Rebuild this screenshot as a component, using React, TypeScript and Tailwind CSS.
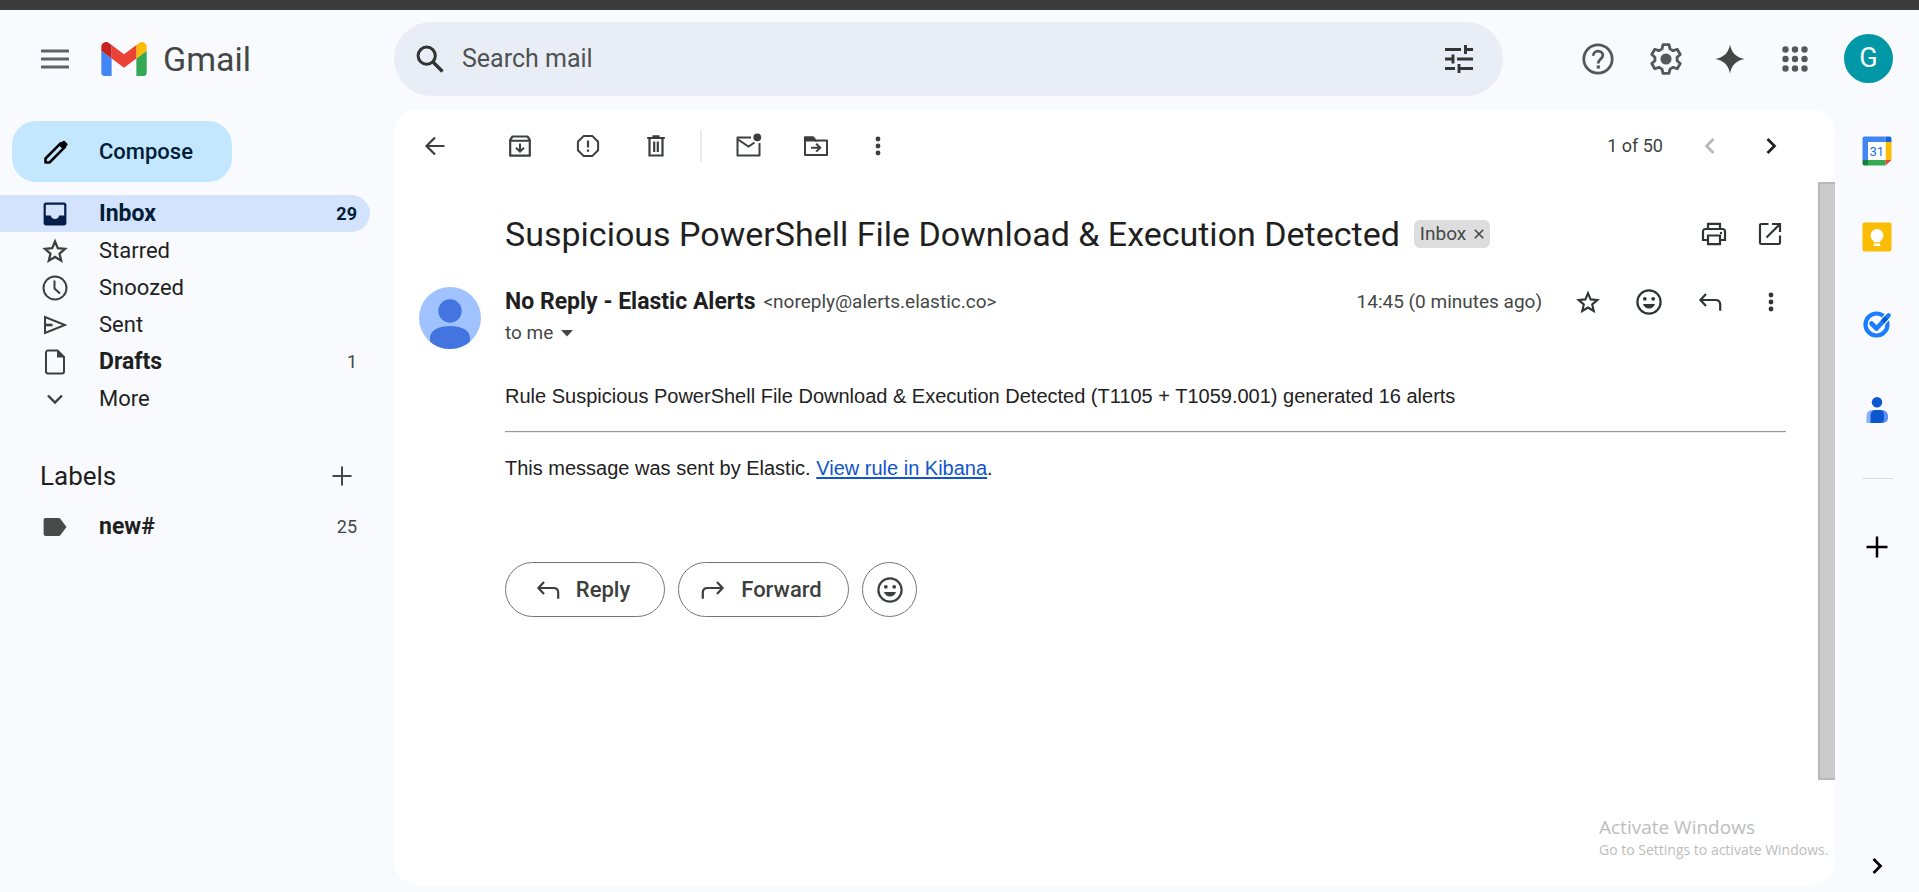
import type { ReactNode } from "react";

type IconProps = { className?: string; box?: number; children: ReactNode };

/* Line icon on a square grid; strokes take the current text colour. */
function Line({ className = "size-6", box = 24, children }: IconProps) {
  return (
    <svg
      viewBox={`0 0 ${box} ${box}`}
      className={`shrink-0 ${className}`}
      fill="none"
      stroke="currentColor"
      strokeWidth={2}
      aria-hidden="true"
    >
      {children}
    </svg>
  );
}

function IconButton({ label, className = "", children }: { label: string; className?: string; children: ReactNode }) {
  return (
    <button type="button" aria-label={label} className={`flex h-12 shrink-0 items-center justify-center ${className}`}>
      {children}
    </button>
  );
}

const MoreIcon = () => (
  <Line>
    <g fill="currentColor" stroke="none">
      <circle cx="12" cy="5" r="2.4" />
      <circle cx="12" cy="12" r="2.4" />
      <circle cx="12" cy="19" r="2.4" />
    </g>
  </Line>
);

const ReplyIcon = () => (
  <Line className="size-6">
    <path d="M8 4 2.400 10 8 16M2.800 10h14.700c2.900 0 4.700 1.900 4.700 4.800v6" strokeWidth="2.200" />
  </Line>
);

const ForwardIcon = () => (
  <Line className="size-6">
    <path d="m16 4 5.600 6-5.600 6M21.200 10H6.500c-2.900 0-4.700 1.900-4.700 4.800v6" strokeWidth="2.200" />
  </Line>
);

const SmileIcon = () => (
  <Line className="size-[26px]" box={26}>
    <circle cx="13" cy="13" r="11.6" strokeWidth="2.2" />
    <g fill="currentColor" stroke="none">
      <circle cx="8.8" cy="9.8" r="1.9" />
      <circle cx="17.2" cy="9.8" r="1.9" />
      <path d="M7 15h12c-.7 2.7-3.1 4.600-6 4.600S7.700 17.700 7 15Z" />
    </g>
  </Line>
);

const StarIcon = ({ className = "size-[26px]" }: { className?: string }) => (
  <Line className={className} box={26}>
    <path
      d="M13 4.200 15.600 10.400 22.300 11 17.200 15.400 18.750 22 13 18.500 7.250 22 8.800 15.400 3.700 11 10.400 10.400Z"
      strokeWidth="2.100"
      strokeLinejoin="miter"
    />
  </Line>
);

const ChevronRight = ({ className = "size-6" }: { className?: string }) => (
  <Line className={className}>
    <path d="m8.500 5 7 7-7 7" strokeWidth="2.700" />
  </Line>
);

const GmailLogo = () => (
  <svg viewBox="52 42 88 66" className="h-[34px] w-[46px] shrink-0" aria-hidden="true">
    <path fill="#4285f4" d="M58 108h14V74L52 59v43c0 3.320 2.690 6 6 6" />
    <path fill="#34a853" d="M120 108h14c3.320 0 6-2.690 6-6V59l-20 15" />
    <path fill="#fbbc04" d="M120 48v26l20-15v-8c0-7.420-8.470-11.650-14.400-7.200" />
    <path fill="#ea4335" d="M72 74V48l24 18 24-18v26L96 92" />
    <path fill="#c5221f" d="M52 51v8l20 15V48l-5.600-4.200c-5.940-4.450-14.400-.22-14.400 7.200" />
  </svg>
);

function Header() {
  return (
    <header className="flex h-[99px] shrink-0 items-center pb-0.5">
      <div className="flex w-[394px] shrink-0 items-center pl-[35px]">
        <button type="button" aria-label="Main menu" className="flex size-10 items-center justify-center text-[#5f6368]">
          <Line className="size-[30px]" box={30}>
            <path d="M1 7h28M1 15h28M1 23h28" strokeWidth="2.800" />
          </Line>
        </button>
        <a href="#inbox" className="ml-[26px] flex items-center gap-4">
          <GmailLogo />
          <span className="text-[34px] leading-10 text-[#444746]">Gmail</span>
        </a>
      </div>
      <form role="search" className="flex h-[74px] min-w-0 flex-1 items-center rounded-full bg-[#e9eef6] pr-7 pl-5 text-[#303433]">
        <button type="button" aria-label="Search" className="flex size-8 shrink-0 items-center justify-center">
          <Line className="size-7" box={28}>
            <circle cx="10.700" cy="10.700" r="8.600" strokeWidth="3" />
            <path d="m17 17 9.500 9.500" strokeWidth="3.400" />
          </Line>
        </button>
        <input
          type="text"
          aria-label="Search mail"
          placeholder="Search mail"
          className="ml-4 min-w-0 flex-1 bg-transparent text-[25px] leading-8 outline-none placeholder:text-[#4f5251]"
        />
        <button type="button" aria-label="Show search options" className="flex size-8 shrink-0 items-center justify-center">
          <Line className="size-[30px]" box={30}>
            <path
              d="M1 5.500h16M21 5.500h8M21.500 1v9M1 15h8M13 15h16M9 10.500v9M1 24.500h10M15 24.500h14M15 20v9"
              strokeWidth="2.900"
            />
          </Line>
        </button>
      </form>
      <div className="flex w-[416px] shrink-0 items-center justify-end pr-[26px] text-[#54585c]">
        <IconButton label="Support" className="w-[68px]">
          <Line className="size-8" box={32}>
            <circle cx="16" cy="16" r="14.200" strokeWidth="2.800" />
            <path
              d="M11.300 12.800c0-2.700 2-4.700 4.800-4.700 2.700 0 4.700 1.800 4.700 4.300 0 3.300-4.600 3.900-4.600 8"
              strokeWidth="2.800"
            />
            <path d="M14.700 22.400h3.200v3.200h-3.200z" fill="currentColor" stroke="none" />
          </Line>
        </IconButton>
        <IconButton label="Settings" className="w-[68px]">
          <Line className="size-[38px]" box={24}>
            <path
              d="M10.100 2.900h3.800l.6 2.700 2 1.150 2.600-.9 1.900 3.300-2 1.750v2.200l2 1.750-1.900 3.300-2.600-.9-2 1.150-.6 2.700h-3.800l-.6-2.700-2-1.150-2.600.9-1.900-3.300 2-1.750v-2.200l-2-1.750 1.900-3.300 2.600.9 2-1.150Z"
              strokeWidth="1.800"
              strokeLinejoin="round"
            />
            <circle cx="12" cy="12" r="3.500" fill="currentColor" stroke="none" />
          </Line>
        </IconButton>
        <IconButton label="Gemini" className="w-[60px] text-[#444746]">
          <Line className="size-[30px]" box={30}>
            <path
              d="M15 .5C16.200 8.200 21.300 13.700 29.500 15 21.300 16.300 16.200 21.800 15 29.500 13.800 21.800 8.700 16.300.5 15 8.700 13.700 13.800 8.200 15 .5Z"
              fill="currentColor"
              stroke="none"
            />
          </Line>
        </IconButton>
        <IconButton label="Google apps" className="w-[70px]">
          <Line className="size-7" box={28}>
            <g fill="currentColor" stroke="none">
              {[4.5, 14, 23.5].map((y) => [4.5, 14, 23.5].map((x) => <circle key={`${x}-${y}`} cx={x} cy={y} r="3.200" />))}
            </g>
          </Line>
        </IconButton>
        <button
          type="button"
          aria-label="Google Account"
          className="ml-3.5 flex size-[49px] shrink-0 items-center justify-center rounded-full bg-[#0097a7] text-[27px] leading-none text-white"
        >
          G
        </button>
      </div>
    </header>
  );
}

type NavEntry = { label: string; count?: string; active?: boolean; bold?: boolean; icon: ReactNode };

const NAV: NavEntry[] = [
  {
    label: "Inbox",
    count: "29",
    active: true,
    bold: true,
    icon: (
      <Line className="size-6">
        <rect x="1.700" y="1.700" width="20.600" height="20.600" rx="1.500" strokeWidth="2.200" />
        <path d="M1.700 13.500h6.100a4.300 4.300 0 0 0 8.400 0h6.100v8.800H1.700Z" fill="currentColor" stroke="none" />
      </Line>
    ),
  },
  { label: "Starred", icon: <StarIcon className="size-7" /> },
  {
    label: "Snoozed",
    icon: (
      <Line className="size-[26px]" box={26}>
        <circle cx="13" cy="13" r="11.500" />
        <path d="M12.500 5.500v8l5.500 5" />
      </Line>
    ),
  },
  {
    label: "Sent",
    icon: (
      <Line className="size-6">
        <path d="M2 4v16l20-8Z" />
        <path d="M2.500 12h7" strokeWidth="2.600" />
      </Line>
    ),
  },
  {
    label: "Drafts",
    count: "1",
    bold: true,
    icon: (
      <Line className="size-[26px]" box={26}>
        <path d="M15.500 1.500H6a2 2 0 0 0-2 2v19a2 2 0 0 0 2 2h14a2 2 0 0 0 2-2V8Z" strokeLinejoin="round" />
        <path d="M15 1.500V8.500h7.200Z" fill="currentColor" stroke="none" />
      </Line>
    ),
  },
  {
    label: "More",
    icon: (
      <Line className="size-6">
        <path d="m5 8.500 7 7 7-7" strokeWidth="2.400" />
      </Line>
    ),
  },
];

function NavRow({ label, count, active, bold, icon }: NavEntry) {
  return (
    <a
      href={`#${label.toLowerCase()}`}
      className={`mr-6 flex h-[37px] items-center rounded-r-full pr-[13px] ${
        active ? "bg-[#d3e3fd] text-[#001d35]" : "text-[#1f1f1f]"
      }`}
    >
      <span className={`ml-[42px] flex w-[26px] justify-center ${active ? "text-[#041e49]" : "text-[#3c3f3e]"}`}>{icon}</span>
      <span className={`ml-[31px] flex-1 leading-7 ${bold ? "text-[23px] font-bold" : "text-[22px]"}`}>{label}</span>
      {count && <span className={`leading-7 ${active ? "text-lg font-bold" : "text-lg text-[#444746]"}`}>{count}</span>}
    </a>
  );
}

function Sidebar() {
  return (
    <nav aria-label="Mailboxes" className="w-[394px] shrink-0 pt-3">
      <button
        type="button"
        className="ml-3 flex h-[61px] w-[220px] items-center rounded-3xl bg-[#c2e7ff] pl-8 text-[22px] leading-7 font-medium text-[#001d35]"
      >
        <Line className="size-6">
          <path d="M1.500 22.500v-4L16.800 3.200l4 4L5.500 22.500Z" strokeWidth="2.600" strokeLinejoin="round" className="text-black" />
          <path d="m14.800 5.200 4-4c.6-.6 1.500-.6 2.100 0l2.300 2.300c.6.600.6 1.500 0 2.100l-4 4Z" fill="#000" stroke="none" />
        </Line>
        <span className="ml-[31px]">Compose</span>
      </button>
      <div className="mt-[13px]">
        {NAV.map((entry) => (
          <NavRow key={entry.label} {...entry} />
        ))}
      </div>
      <div className="mt-[35px] flex h-12 items-center justify-between pr-9 pl-10">
        <h2 className="text-[26px] leading-8 text-[#1f1f1f]">Labels</h2>
        <button type="button" aria-label="Create new label" className="flex size-8 items-center justify-center text-[#444746]">
          <Line className="size-5" box={20}>
            <path d="M10 .5v19M.5 10h19" />
          </Line>
        </button>
      </div>
      <div className="mt-2">
        <NavRow
          label="new#"
          count="25"
          bold
          icon={
            <Line className="size-6">
              <path
                d="M2.500 3h13.300c.7 0 1.300.3 1.700.9L23.500 12l-6 8.100c-.4.600-1 .9-1.700.9H2.500C1.400 21 .6 20.200.6 19.100V4.900C.6 3.800 1.400 3 2.500 3Z"
                fill="#47494a"
                stroke="none"
              />
            </Line>
          }
        />
      </div>
    </nav>
  );
}

function Toolbar() {
  return (
    <div className="flex h-[73px] shrink-0 items-center pr-[34px] pl-[15px] text-[#3c3f3e]">
      <IconButton label="Back to Inbox" className="mr-[25px] w-[52px]">
        <Line className="size-[22px]" box={22}>
          <path d="M11 2.500 2.500 11l8.500 8.500M3 11h17.500" strokeWidth="2.200" />
        </Line>
      </IconButton>
      <IconButton label="Archive" className="w-[68px]">
        <Line>
          <path d="M2.200 5.800 4.500 2.500h15l2.300 3.300v15.900H2.200Z" strokeWidth="2.200" strokeLinejoin="round" />
          <path d="M2.500 6.800h19M12 9.500v8M8 13.700l4 4 4-4" />
        </Line>
      </IconButton>
      <IconButton label="Report spam" className="w-[68px]">
        <Line>
          <path d="M7.800 1.900h8.400l5.900 5.900v8.400l-5.900 5.900H7.800l-5.900-5.900V7.800Z" strokeLinejoin="round" />
          <path d="M12 6.500v7M12 15.500v2.300" strokeWidth="2.200" />
        </Line>
      </IconButton>
      <IconButton label="Delete" className="w-[68px]">
        <Line>
          <path d="M3.200 4h17.600M8.500 2.400h7M5.500 4v17.500h13V4M10.200 7.500v10.500M13.800 7.500v10.500" strokeWidth="2.200" />
        </Line>
      </IconButton>
      <span className="mr-3 ml-2.5 h-8 w-0.5 bg-[#ebebeb]" />
      <IconButton label="Mark as unread" className="w-[68px]">
        <Line className="size-[27px]" box={27}>
          <path d="M16 5.500H2.500v18h22V11" strokeLinejoin="round" />
          <path d="m3 7.500 10.500 7 6-4" />
          <circle cx="22.300" cy="5.300" r="3.900" fill="currentColor" stroke="none" />
        </Line>
      </IconButton>
      <IconButton label="Move to" className="w-[68px]">
        <Line className="size-[26px]" box={26}>
          <path d="M2 4.500h8l2.500 3H24v14.500H2Z" strokeLinejoin="round" />
          <path d="M2 4.500h8l2.500 3H2Z" fill="currentColor" />
          <path d="M8 14.700h9M13.200 10.800l4 3.900-4 3.900" />
        </Line>
      </IconButton>
      <IconButton label="More" className="w-14">
        <MoreIcon />
      </IconButton>
      <span className="ml-auto pr-4 text-lg leading-7">1 of 50</span>
      <IconButton label="Newer" className="w-[61px] text-[#b4b6b5]">
        <Line>
          <path d="m15.500 5-7 7 7 7" strokeWidth="2.500" />
        </Line>
      </IconButton>
      <IconButton label="Older" className="w-[61px] text-[#1f1f1f]">
        <ChevronRight />
      </IconButton>
    </div>
  );
}

const pill = "flex h-[55px] items-center justify-center rounded-full border border-[#747775]";

function Message() {
  return (
    <article className="min-w-0 flex-1 pt-8 pr-[17px] text-[#1f1f1f]">
      <div className="flex h-10 items-center pl-[111px]">
        <h1 className="text-[34px] leading-10 whitespace-nowrap">
          Suspicious PowerShell File Download &amp; Execution Detected
        </h1>
        <span className="ml-3.5 flex h-7 shrink-0 items-center gap-2 rounded-md bg-[#dddddd] px-1.5 text-[19px] leading-7 text-[#444746]">
          Inbox
          <button type="button" aria-label="Remove label Inbox">
            <Line className="size-2.5" box={10}>
              <path d="m.8.8 8.400 8.400M9.200.8.8 9.200" strokeWidth="1.600" />
            </Line>
          </button>
        </span>
        <div className="ml-auto flex pr-[3px] text-[#303433]">
          <IconButton label="Print" className="w-14">
            <Line className="size-[26px]" box={26}>
              <path d="M7 8V2.800h12V8M7 19H2v-8.500C2 9 3 8 4.500 8h17C23 8 24 9 24 10.500V19h-5" strokeWidth="2.200" />
              <path d="M7 14.500h12v8.700H7Z" strokeWidth="2.200" />
              <circle cx="20" cy="12" r="1.200" fill="currentColor" stroke="none" />
            </Line>
          </IconButton>
          <IconButton label="Open in new window" className="w-14">
            <Line>
              <path d="M10.500 2H3.300C2.600 2 2 2.600 2 3.300v17.400c0 .7.600 1.300 1.300 1.300h17.400c.7 0 1.300-.6 1.300-1.300v-7.200M14 2h8v8M21.500 2.500 8.500 15.500" strokeWidth="2.200" />
            </Line>
          </IconButton>
        </div>
      </div>

      <div className="mt-[33px] flex pl-[25px]">
        <svg viewBox="0 0 62 62" className="mr-6 size-[62px] shrink-0" aria-hidden="true">
          <defs>
            <clipPath id="avatar-disc">
              <circle cx="31" cy="31" r="31" />
            </clipPath>
          </defs>
          <g clipPath="url(#avatar-disc)">
            <path fill="#a0c3ff" d="M0 0h62v62H0z" />
            <circle cx="31" cy="24" r="11.700" fill="#4374e0" />
            <path fill="#4374e0" d="M11 51c0-8 9-12 20-12s20 4 20 12v12H11Z" />
          </g>
        </svg>
        <div className="min-w-0 flex-1">
          <div className="flex h-[30px] items-center gap-2">
            <h2 className="text-[23px] leading-[30px] font-bold">No Reply - Elastic Alerts</h2>
            <span className="text-[19px] leading-[30px] text-[#444746]">&lt;noreply@alerts.elastic.co&gt;</span>
          </div>
          <button type="button" className="flex h-8 items-center gap-2 text-[19px] leading-8 text-[#444746]">
            to me
            <Line className="size-3" box={12}>
              <path d="M0 3h12L6 9.500Z" fill="currentColor" stroke="none" />
            </Line>
          </button>
        </div>
        <div className="flex h-[30px] items-center text-[#303433]">
          <span className="mr-[15px] text-[19px] leading-[30px] text-[#444746]">14:45 (0 minutes ago)</span>
          <IconButton label="Star" className="w-[61px]">
            <StarIcon />
          </IconButton>
          <IconButton label="Add reaction" className="w-[61px]">
            <SmileIcon />
          </IconButton>
          <IconButton label="Reply" className="w-[61px]">
            <ReplyIcon />
          </IconButton>
          <IconButton label="More message options" className="w-[61px]">
            <MoreIcon />
          </IconButton>
        </div>
      </div>

      <div className="mt-8 mr-[15px] ml-[111px] font-['Liberation_Sans',Arial,sans-serif] text-[20px] leading-[30px] text-[#222222]">
        <p>Rule Suspicious PowerShell File Download &amp; Execution Detected (T1105 + T1059.001) generated 16 alerts</p>
        <hr className="my-5 border-y border-t-[#979797] border-b-[#eeeeee]" />
        <p>
          This message was sent by Elastic.{" "}
          <a href="#rule" className="text-[#1155cc] underline decoration-2 underline-offset-2">
            View rule in Kibana
          </a>
          .
        </p>
      </div>

      <div className="mt-[79px] ml-[111px] flex gap-[13px] text-[22px] leading-7 font-medium text-[#3c3f3e]">
        <button type="button" className={`${pill} w-40 gap-4 pr-1`}>
          <ReplyIcon />
          Reply
        </button>
        <button type="button" className={`${pill} w-[171px] gap-4 pr-1`}>
          <ForwardIcon />
          Forward
        </button>
        <button type="button" aria-label="Add reaction" className={`${pill} w-[55px]`}>
          <SmileIcon />
        </button>
      </div>
    </article>
  );
}

function SidePanel() {
  return (
    <aside aria-label="Side panel" className="flex w-[84px] shrink-0 flex-col items-center">
      <button type="button" aria-label="Calendar" className="mt-[27px] flex h-[30px] items-center">
        <svg viewBox="0 0 30 30" className="size-[30px]" aria-hidden="true">
          <path fill="#4285f4" d="M2.500.5h21V6H6v18H.5V2.500a2 2 0 0 1 2-2Z" />
          <path fill="#1967d2" d="M23.500.5h4a2 2 0 0 1 2 2V6h-6Z" />
          <path fill="#fbbc04" d="M23.500 6h6v18h-6Z" />
          <path fill="#34a853" d="M6 24h17.500v5.500H6Z" />
          <path fill="#188038" d="M.5 24H6v5.500H2.500a2 2 0 0 1-2-2Z" />
          <path fill="#ea4335" d="M23.500 24h6l-6 5.500Z" />
          <path fill="#fff" d="M6 6h17.500v18H6Z" />
          <text
            x="14.800"
            y="20"
            textAnchor="middle"
            className="font-['Roboto',sans-serif] text-[13px]"
            fill="#1a73e8"
          >
            31
          </text>
        </svg>
      </button>
      <button type="button" aria-label="Keep" className="mt-14 flex h-[30px] items-center">
        <svg viewBox="0 0 30 30" className="size-[30px]" aria-hidden="true">
          <rect x=".5" y=".5" width="29" height="29" rx="2" fill="#fbbc04" />
          <circle cx="15" cy="13.500" r="6.500" fill="#fff" />
          <path fill="#fff" d="M11.800 17h6.400v3.200h-6.400zM11.800 21.500h6.400v2.400h-6.400z" />
        </svg>
      </button>
      <button type="button" aria-label="Tasks" className="mt-[57px] flex h-[30px] items-center">
        <svg viewBox="0 0 30 30" className="size-[30px]" fill="none" aria-hidden="true">
          <circle cx="14.500" cy="15.500" r="11" stroke="#1a7cff" strokeWidth="4.200" />
          <path d="m9.500 14.500 5 5L27 6" stroke="#f8fafd" strokeWidth="7" />
          <path d="m9.500 14.500 5 5L26.500 6.500" stroke="#1a7cff" strokeWidth="4.600" strokeLinejoin="round" strokeLinecap="round" />
          <path d="m20.700 12.700 3.600-3.900" stroke="#0b57d0" strokeWidth="4.600" />
        </svg>
      </button>
      <button type="button" aria-label="Contacts" className="mt-14 flex h-[30px] items-center">
        <svg viewBox="0 0 30 30" className="size-[30px]" aria-hidden="true">
          <path fill="#8ab0fb" d="M10 15h6v13H4.500V20.500A5.500 5.500 0 0 1 10 15Z" />
          <path fill="#5e8ff8" d="M15 15h5a6 6 0 0 1 6 6v2a5 5 0 0 1-5 5h-6Z" />
          <path fill="#0b57d0" d="M13.500 15h4a4.500 4.500 0 0 1 4.500 4.500V24a4 4 0 0 1-4 4H8.500v-8a5 5 0 0 1 5-5Z" />
          <circle cx="15" cy="7.200" r="5.200" fill="#0b57d0" />
        </svg>
      </button>
      <span className="mt-[53px] h-px w-[31px] bg-[#dadcda]" />
      <button type="button" aria-label="Get add-ons" className="mt-14 flex size-6 items-center justify-center text-black">
        <Line className="size-[22px]" box={22}>
          <path d="M11 .5v21M.5 11h21" strokeWidth="2.500" />
        </Line>
      </button>
      <button type="button" aria-label="Hide side panel" className="mt-auto mb-[7px] flex size-6 items-center justify-center text-black">
        <ChevronRight />
      </button>
    </aside>
  );
}

export default function App() {
  return (
    <div className="flex min-h-screen flex-col bg-[#f8fafe] font-['Roboto',sans-serif]">
      <div className="h-2.5 shrink-0 bg-[#3b3b3b]" />
      <Header />
      <div className="flex min-h-0 flex-1 pb-[7px]">
        <Sidebar />
        <main className="relative flex min-w-0 flex-1 flex-col overflow-hidden rounded-3xl bg-white">
          <Toolbar />
          <div className="flex min-h-0 flex-1">
            <Message />
            <div className="w-[17px] shrink-0">
              <div className="h-[85%] border-2 border-r-0 border-[#b9b9b9] bg-[#cbcbcb]" />
            </div>
          </div>
          <div className="absolute right-0 bottom-6 w-[236px] font-['Open_Sans','Noto_Sans',sans-serif] whitespace-nowrap text-[#bdbdbd]">
            <p className="text-[19px] leading-6">Activate Windows</p>
            <p className="text-sm leading-[22px]">Go to Settings to activate Windows.</p>
          </div>
        </main>
        <SidePanel />
      </div>
    </div>
  );
}
